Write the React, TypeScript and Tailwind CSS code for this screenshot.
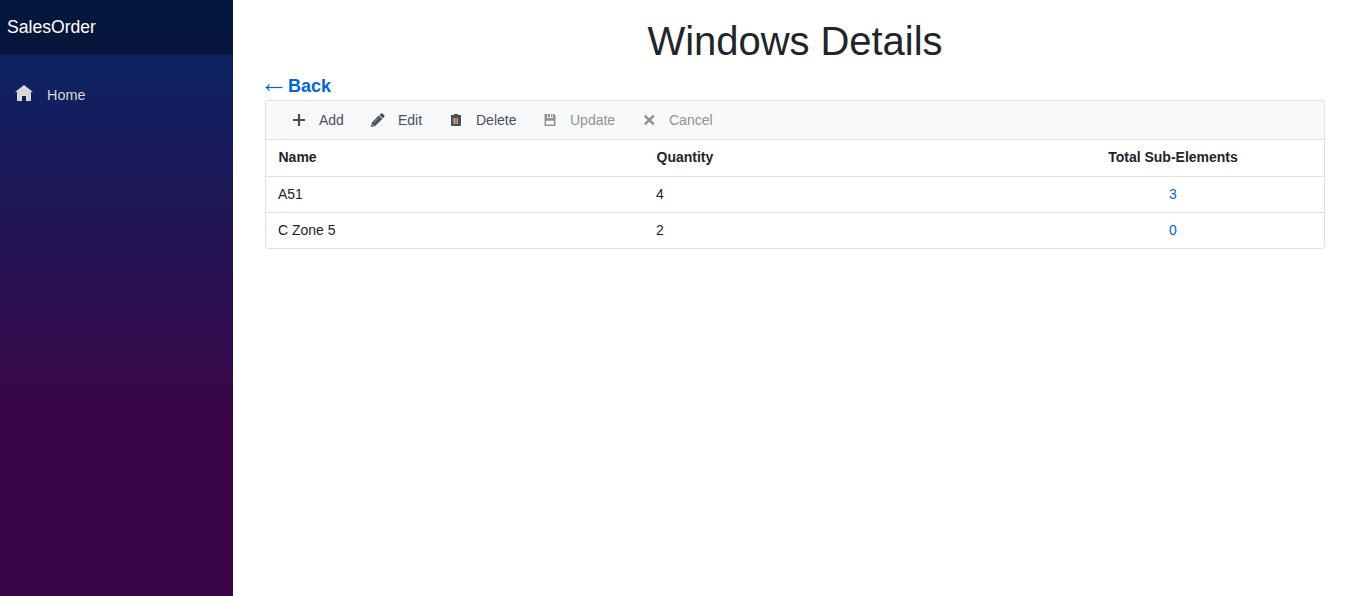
import type { ReactNode } from "react";

type Tool = { label: string; width: string; disabled?: boolean; icon: ReactNode };

const tools: Tool[] = [
  {
    label: "Add",
    width: "w-[79px]",
    icon: <path d="M6.9 2h2.2v4.9H14v2.2H9.1V14H6.9V9.1H2V6.9h4.9z" />,
  },
  {
    label: "Edit",
    width: "w-[78px]",
    icon: (
      <>
        <path d="M10.7 1.7q1-1 2 0l1.4 1.4q1 1 0 2l-1.3 1.3-3.4-3.4z" />
        <path d="M8.7 3.5l3.6 3.6-7.2 7L.9 15l1-4.4z" />
        <path d="M8.6 6l-4.8 4.7" stroke="#b9bdc1" strokeWidth=".7" />
        <path d="M2.3 12.2l1.4 1.4" stroke="#f8f9fa" strokeWidth=".8" />
      </>
    ),
  },
  {
    label: "Delete",
    width: "w-[94px]",
    icon: (
      <>
        <path d="M6 2h4v1h3v1.5H3V3h3zM3 4.5h10V13q0 1-1 1H4q-1 0-1-1z" />
        <path d="M6.5 6v6M9.5 6v6" stroke="#e0935a" strokeWidth="1" />
        <path d="M5.5 6v6M8.5 6v6" stroke="#71879a" strokeWidth="1" />
        <path d="M7.5 6v6" stroke="#b17a57" strokeWidth="1" />
      </>
    ),
  },
  {
    label: "Update",
    width: "w-[99px]",
    disabled: true,
    icon: (
      <path
        fillRule="evenodd"
        d="M2.5 2H5v4h6V2h1l1.5 1.5V14h-11zM5.7 2H8v3H5.7zM9 2h1.3v3H9zM4 8.8v3.7h8V8.8z"
      />
    ),
  },
  {
    label: "Cancel",
    width: "w-[90px]",
    disabled: true,
    icon: <path d="M3.8 3.6l9 8.8M12.8 3.6l-9 8.8" stroke="currentColor" strokeWidth="2.5" />,
  },
];

const rows = [
  { name: "A51", quantity: 4, total: 3 },
  { name: "C Zone 5", quantity: 2, total: 0 },
];

const columns = "grid grid-cols-[378px_378px_302px]";

export default function App() {
  return (
    <div className="flex h-screen w-full overflow-hidden bg-white font-['Liberation_Sans',Arial,sans-serif] text-[#212529]">
      <aside className="w-[233px] shrink-0 bg-[linear-gradient(180deg,rgb(5,39,103)_0%,#3a0647_70%)]">
        <div className="flex h-[55px] items-center bg-black/40 pl-[7px] text-[17.6px] text-white">
          <span className="-mt-px">SalesOrder</span>
        </div>
        <nav className="pt-[27px]">
          <a className="flex h-[26px] items-center pl-[15px] text-[14.4px] text-[#d7d7d7]">
            <svg width="18" height="16" viewBox="0 0 18 16" className="-mt-1 fill-current">
              <path d="M9 0l9 7h-2v9h-5v-5H7v5H2V7H0z" />
            </svg>
            <span className="pl-[14px] pt-0.5">Home</span>
          </a>
        </nav>
      </aside>
      <main className="min-w-0 flex-1 pl-8 pr-5">
        <h1 className="pt-[17px] text-center text-[40px] leading-[48px] tracking-[-0.05px]">Windows Details</h1>
        <div className="flex h-[35px] items-center pt-[7px] text-[18px] leading-[27px] text-[#0366d6]">
          <a className="flex items-center font-bold whitespace-pre">
            <svg width="18" height="9" viewBox="0 0 18 9" className="mt-[3px]" fill="none" stroke="currentColor">
              <path d="M1.3 4.5H17.5" strokeWidth="1.2" />
              <path d="M4.3 1.3Q3.5 3.5 1.3 4.5 3.5 5.5 4.3 7.7" strokeWidth="1.1" />
            </svg>
            <span> Back</span>
          </a>
        </div>
        <section className="overflow-hidden rounded-[3px] border border-[#dee2e6] text-[14px]">
          <div className="flex h-[39px] items-center border-b border-[#dee2e6] bg-[#f8f9fa] pl-[25px]">
            {tools.map((tool) => (
              <button
                key={tool.label}
                className={`flex shrink-0 items-center gap-3 ${tool.width} ${tool.disabled ? "text-[#909294]" : "text-[#495057]"}`}
              >
                <svg width="16" height="16" viewBox="0 0 16 16" fill="currentColor" className="shrink-0">
                  {tool.icon}
                </svg>
                <span>{tool.label}</span>
              </button>
            ))}
          </div>
          <div className={`${columns} h-[37px] items-center border-b border-[#dee2e6] font-bold`}>
            <span className="-mt-0.5 pl-[12.5px]">Name</span>
            <span className="-mt-0.5 pl-[12.5px]">Quantity</span>
            <span className="-mt-0.5 text-center">Total Sub-Elements</span>
          </div>
          {rows.map((row) => (
            <div key={row.name} className={`${columns} h-9 items-center border-b border-[#dee2e6] last:h-[35px] last:border-b-0`}>
              <span className="pl-3">{row.name}</span>
              <span className="pl-3">{row.quantity}</span>
              <span className="text-center text-[#0366d6]">{row.total}</span>
            </div>
          ))}
        </section>
      </main>
    </div>
  );
}
